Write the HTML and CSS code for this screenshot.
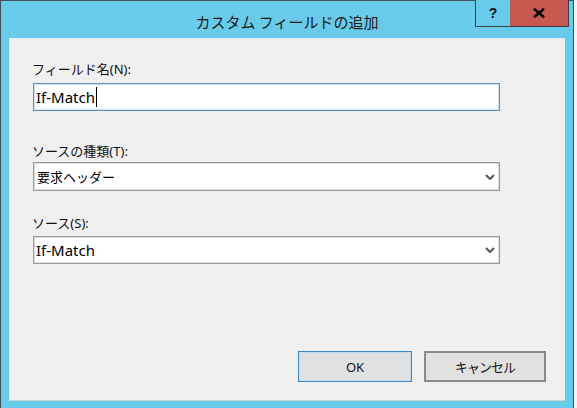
FILE: index.html
```html
<!DOCTYPE html>
<html lang="ja">
<head>
<meta charset="utf-8">
<title>カスタム フィールドの追加</title>
<link rel="stylesheet" href="styles.css">
</head>
<body>
<div class="window">
  <div class="titlebar">
    <div class="title">カスタム フィールドの追加</div>
    <div class="caption-buttons">
      <div class="cap-btn help">?</div>
      <div class="cap-btn close">
        <svg width="12" height="10" viewBox="0 0 12 10"><path d="M1 0.8 L11 9.2 M11 0.8 L1 9.2" stroke="#000" stroke-width="2.6" fill="none"/></svg>
      </div>
    </div>
  </div>
  <div class="panel">
    <div class="field field-name">
      <div class="label">フィールド名(N):</div>
      <div class="box textbox"><span class="latin">If-Match</span><span class="caret"></span></div>
    </div>
    <div class="field field-type">
      <div class="label">ソースの種類(T):</div>
      <div class="box combo"><span class="value">要求ヘッダー</span><svg class="chev" width="10" height="6" viewBox="0 0 10 6"><polyline points="1,1 5,5 9,1" stroke="#555" stroke-width="2" fill="none"/></svg></div>
    </div>
    <div class="field field-source">
      <div class="label">ソース(S):</div>
      <div class="box combo"><span class="value latin">If-Match</span><svg class="chev" width="10" height="6" viewBox="0 0 10 6"><polyline points="1,1 5,5 9,1" stroke="#555" stroke-width="2" fill="none"/></svg></div>
    </div>
    <div class="buttons">
      <div class="btn btn-ok">OK</div>
      <div class="btn btn-cancel">キャンセル</div>
    </div>
  </div>
</div>
</body>
</html>
```
FILE: styles.css
```css
html, body {
  margin: 0;
  padding: 0;
}
body {
  width: 577px;
  height: 408px;
  overflow: hidden;
  background: #f4f4f4;
  font-family: "Noto Sans", "Noto Sans CJK JP", sans-serif;
  color: #000;
}
.window {
  box-sizing: border-box;
  width: 574px;
  height: 408px;
  background: #69cbea;
  border: 1px solid #45525b;
  border-bottom: none;
}
.titlebar {
  position: relative;
  height: 37px;
  display: flex;
  align-items: center;
  justify-content: center;
  box-sizing: border-box;
  padding-top: 4px;
}
.title {
  font-size: 15px;
  line-height: 18px;
  color: #1a1a1a;
  font-family: "Noto Sans CJK JP", sans-serif;
}
.caption-buttons {
  position: absolute;
  top: -1px;
  right: 4px;
  display: flex;
  height: 27px;
  box-sizing: border-box;
  border: 1px solid #3a3f44;
  border-top: none;
}
.cap-btn {
  display: flex;
  align-items: center;
  justify-content: center;
  height: 100%;
}
.help {
  width: 34px;
  background: #69cbea;
  font-family: "Liberation Sans", sans-serif;
  font-weight: bold;
  font-size: 14px;
  color: #111;
  padding-bottom: 1px;
  box-sizing: border-box;
}
.close {
  width: 58px;
  background: #c75a50;
}
.panel {
  margin: 0 8px;
  height: 363px;
  box-sizing: border-box;
  background: #f0f0f0;
  padding: 23px 0 0 24px;
  box-shadow: inset 1px 1px 0 #d9ecf5, inset 0 -1px 0 #c8d4db;
}
.label {
  font-size: 13px;
  line-height: 16px;
  color: #111;
  margin-left: -1px;
}
.box {
  box-sizing: border-box;
  width: 467px;
  background: #fff;
  font-size: 14px;
  display: flex;
  align-items: center;
  padding-left: 2px;
}
.latin {
  font-size: 15px;
  line-height: 18px;
}
.textbox {
  height: 28px;
  margin-top: 6px;
  border: 1px solid #5f8fbc;
  box-shadow: inset 0 0 0 1px #d3e1ee;
}
.caret {
  display: inline-block;
  width: 1px;
  height: 20px;
  background: #000;
  margin-left: 1px;
}
.combo {
  height: 29px;
  border: 1px solid #9a9a9a;
  box-shadow: inset 0 0 0 1px #dcdcdc;
  justify-content: space-between;
  padding-right: 4px;
}
.combo .value {
  line-height: 18px;
}
.field-type .combo .value {
  padding-left: 1px;
  font-size: 13px;
}
.field-type {
  margin-top: 32px;
}
.field-type .combo {
  margin-top: 3px;
}
.field-source {
  margin-top: 24px;
}
.field-source .combo {
  margin-top: 5px;
  height: 28px;
}
.chev {
  display: block;
}
.buttons {
  display: flex;
  justify-content: flex-end;
  gap: 12px;
  margin-top: 87px;
  padding-right: 19px;
}
.btn {
  box-sizing: border-box;
  height: 31px;
  background: #e1e1e1;
  display: flex;
  align-items: center;
  justify-content: center;
  font-size: 13px;
  color: #111;
}
.btn-ok {
  width: 114px;
  border: 1px solid #3d86c6;
  box-shadow: inset 0 0 0 1px #c7dcef;
}
.btn-cancel {
  width: 122px;
  border: 2px solid #8a8a8a;
  letter-spacing: -1px;
}
```
